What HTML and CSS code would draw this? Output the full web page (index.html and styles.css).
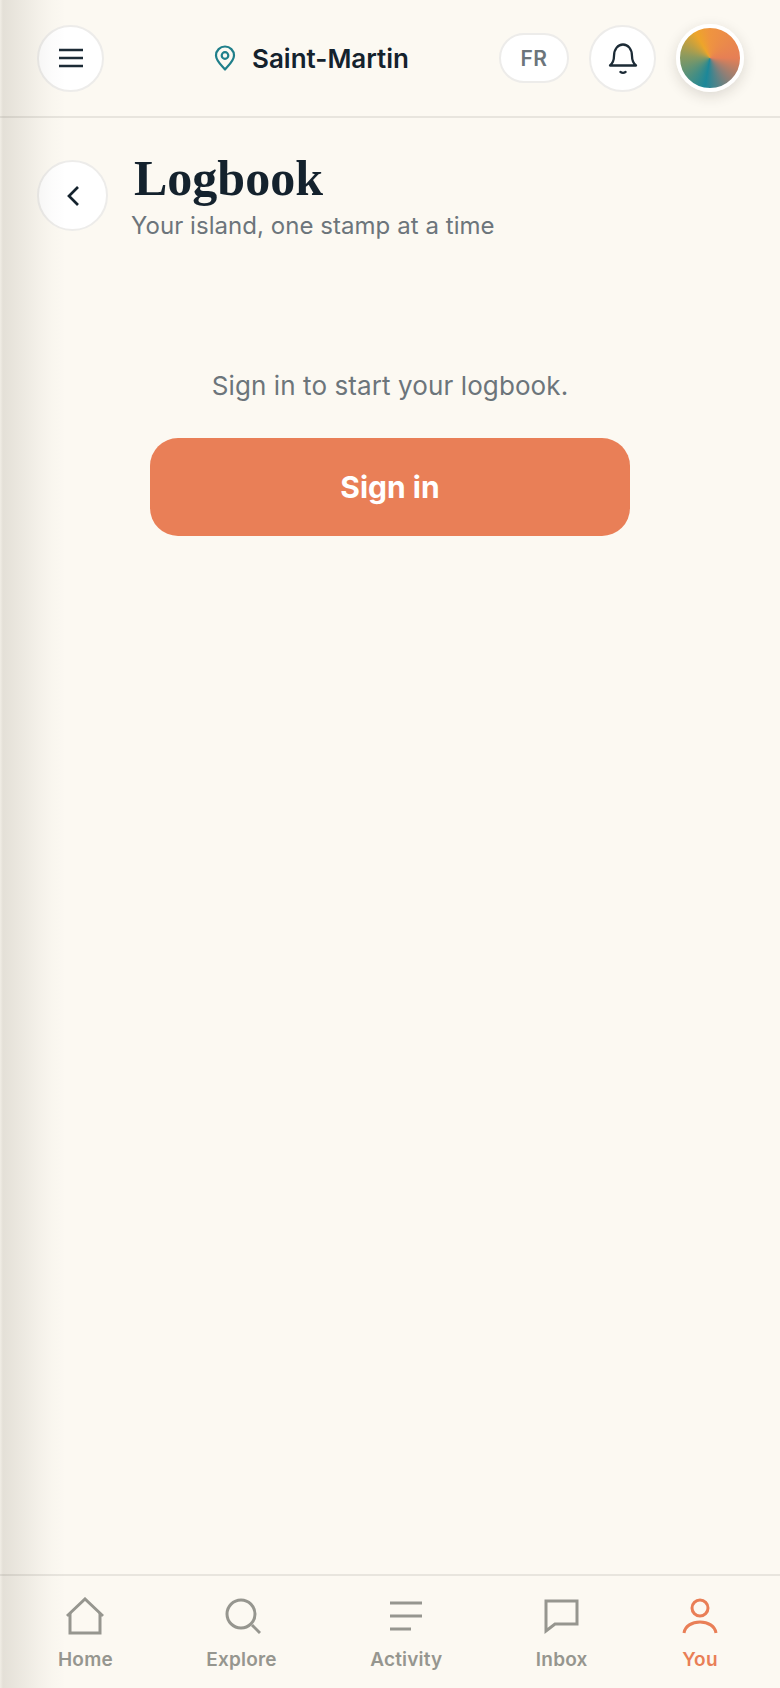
FILE: index.html
```html
<!DOCTYPE html>
<html lang="en">
<head>
  <meta charset="UTF-8" />
  <meta name="viewport" content="width=device-width, initial-scale=1.0"/>
  <title>Logbook</title>
  <link rel="stylesheet" href="styles.css">
</head>
<body>
  <div class="app">
    <header class="topbar">
      <button class="round-btn" aria-label="Menu">
        <svg width="26" height="20" viewBox="0 0 26 20" fill="none" stroke="#1c2b36" stroke-width="2.4"><path d="M1 2h24M1 10h24M1 18h24"/></svg>
      </button>
      <div class="place">
        <svg width="22" height="26" viewBox="0 0 22 26" fill="none" stroke="#1f7f8a" stroke-width="2.2"><path d="M11 24.500C6.500 19.500 2 15.500 2 10.500a9 9 0 0 1 18 0c0 5-4.500 9-9 14z" stroke-linejoin="round"/><circle cx="11" cy="10.500" r="3.300"/></svg>
        <span>Saint-Martin</span>
      </div>
      <div class="topbar-right">
        <button class="lang-btn">FR</button>
        <button class="round-btn" aria-label="Notifications">
          <svg width="30" height="34" viewBox="0 0 30 34" fill="none" stroke="#1c2b36" stroke-width="2.300" stroke-linejoin="round"><path d="M2 24.500c3-2.500 4-4.500 4-9.500 0-7 4-11.500 9-11.500s9 4.500 9 11.500c0 5 1 7 4 9.500z"/><path d="M12.500 31c1.500 1 3.500 1 5 0" stroke-linecap="round"/></svg>
        </button>
        <div class="avatar"></div>
      </div>
    </header>

    <main class="content">
      <div class="page-head">
        <button class="round-btn back-btn" aria-label="Back">
          <svg width="16" height="22" viewBox="0 0 16 22" fill="none" stroke="#14222d" stroke-width="2.700"><path d="M13 2 4 11l9 9"/></svg>
        </button>
        <div>
          <h1>Logbook</h1>
          <p class="subtitle">Your island, one stamp at a time</p>
        </div>
      </div>

      <div class="signin-box">
        <p>Sign in to start your logbook.</p>
        <button class="signin-btn">Sign in</button>
      </div>
    </main>

    <nav class="tabbar">
      <a class="tab">
        <svg width="38" height="38" viewBox="0 0 38 38" fill="none" stroke="currentColor" stroke-width="3"><path d="M1 19 19 2l18 17"/><path d="M4 16v20h30V16"/></svg>
        <span>Home</span>
      </a>
      <a class="tab">
        <svg width="38" height="38" viewBox="0 0 38 38" fill="none" stroke="currentColor" stroke-width="3"><circle cx="18" cy="17" r="14"/><path d="m29 28 8 8"/></svg>
        <span>Explore</span>
      </a>
      <a class="tab">
        <svg width="38" height="38" viewBox="0 0 38 38" fill="none" stroke="currentColor" stroke-width="3"><path d="M3 6h32M3 19h32M3 32h21"/></svg>
        <span>Activity</span>
      </a>
      <a class="tab">
        <svg width="38" height="38" viewBox="0 0 38 38" fill="none" stroke="currentColor" stroke-width="3"><path d="M3 4h31v23H12l-9 7z"/></svg>
        <span>Inbox</span>
      </a>
      <a class="tab active">
        <svg width="38" height="38" viewBox="0 0 38 38" fill="none" stroke="currentColor" stroke-width="3"><circle cx="19" cy="11" r="8"/><path d="M3 36c1-7 8-11 16-11s15 4 16 11"/></svg>
        <span>You</span>
      </a>
    </nav>
  </div>
</body>
</html>
```
FILE: styles.css
```css
:root {
  --bg: #fcf9f2;
  --border: #e8e5de;
  --ink: #14222d;
  --muted: #6c757b;
  --coral: #e97f57;
  --tab: #96968f;
}

* {
  box-sizing: border-box;
}

body {
  margin: 0;
  background: var(--bg);
  font-family: Inter, "Open Sans", sans-serif;
  color: var(--ink);
}

button {
  font-family: inherit;
  cursor: pointer;
}

.app {
  position: relative;
  height: 1688px;
  display: flex;
  flex-direction: column;
}

.app::before {
  content: "";
  position: absolute;
  top: 0;
  bottom: 0;
  left: 0;
  width: 66px;
  pointer-events: none;
  background: linear-gradient(to right, rgba(60, 50, 30, 0.06) 0, rgba(60, 50, 30, 0.125) 3px, rgba(60, 50, 30, 0.085) 20px, rgba(60, 50, 30, 0.04) 40px, rgba(60, 50, 30, 0.015) 52px, rgba(60, 50, 30, 0) 66px);
}

.topbar {
  height: 118px;
  flex: none;
  display: flex;
  align-items: center;
  justify-content: space-between;
  padding: 0 36px 0 37px;
  border-bottom: 2px solid var(--border);
}

.round-btn {
  width: 67px;
  height: 67px;
  display: flex;
  align-items: center;
  justify-content: center;
  padding: 0;
  background: #fff;
  border: 2px solid #edecea;
  border-radius: 50%;
}

.place {
  display: flex;
  align-items: center;
  gap: 16px;
  margin-left: 20px;
  font-size: 26px;
  font-weight: 600;
}

.topbar-right {
  display: flex;
  align-items: center;
  gap: 20px;
}

.lang-btn {
  width: 70px;
  height: 50px;
  background: #fff;
  border: 2px solid #edecea;
  border-radius: 25px;
  color: var(--muted);
  font-size: 21px;
  font-weight: 600;
  letter-spacing: 0.5px;
}

.avatar {
  width: 68px;
  height: 68px;
  border: 4px solid #fff;
  border-radius: 50%;
  background: conic-gradient(#ef9440 0deg, #e67f55 90deg, #8a7f78 140deg, #1c8799 190deg, #8c9a5e 275deg, #eda52a 330deg, #ef9440 360deg);
  box-shadow: 0 4px 14px rgba(40, 35, 25, 0.15);
}

.content {
  flex: 1;
}

.page-head {
  display: flex;
  align-items: flex-start;
  gap: 24px;
  padding: 32px 37px 0;
}

.back-btn {
  width: 71px;
  height: 71px;
  margin-top: 10px;
}

h1 {
  margin: 0 0 0 2px;
  font-family: "Liberation Serif", serif;
  font-size: 50px;
  line-height: 56px;
  font-weight: 700;
}

.subtitle {
  margin: 5px 0 0 -1px;
  font-size: 24px;
  line-height: 30px;
  letter-spacing: 0.05px;
  color: var(--muted);
}

.signin-box {
  display: flex;
  flex-direction: column;
  align-items: center;
  margin-top: 125px;
}

.signin-box p {
  margin: 0 0 32px;
  font-size: 26px;
  line-height: 40px;
  letter-spacing: 0.1px;
  color: var(--muted);
}

.signin-btn {
  width: 480px;
  height: 98px;
  background: var(--coral);
  border: none;
  border-radius: 28px;
  color: #fff;
  font-size: 30px;
  font-weight: 700;
}

.tabbar {
  height: 114px;
  flex: none;
  display: flex;
  justify-content: space-between;
  align-items: flex-start;
  padding: 21px 61px 0 58px;
  border-top: 2px solid var(--border);
}

.tab {
  display: flex;
  flex-direction: column;
  align-items: center;
  gap: 14px;
  color: var(--tab);
  font-size: 19px;
  line-height: 22px;
  font-weight: 600;
  letter-spacing: 0.2px;
}

.tab.active {
  color: var(--coral);
}
```
